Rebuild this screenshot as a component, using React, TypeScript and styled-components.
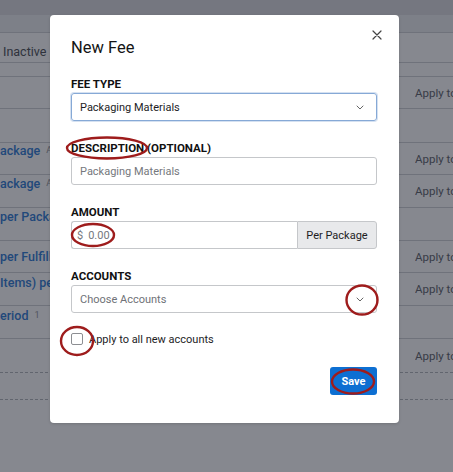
import React from "react";
import styled, { createGlobalStyle } from "styled-components";

const Global = createGlobalStyle`
  html, body { margin: 0; padding: 0; }
  body {
    width: 453px;
    height: 472px;
    overflow: hidden;
    background: #ffffff;
    font-family: Roboto, "Liberation Sans", Arial, sans-serif;
    -webkit-font-smoothing: antialiased;
  }
  * { box-sizing: border-box; }
`;

const Page = styled.div`
  position: relative;
  width: 453px;
  height: 472px;
  overflow: hidden;
  background: #ffffff;
`;

const NavBar = styled.div`
  height: 15px;
  background: #dedfe2;
`;

const SubBar = styled.div`
  height: 18px;
  background: #eeeff1;
  border-bottom: 1px solid #d3d5d9;
`;

const Row = styled.div<{ $h: number; $dashed?: boolean }>`
  height: ${(p) => p.$h}px;
  display: grid;
  grid-template-columns: 415px 38px;
  border-bottom: 1px ${(p) => (p.$dashed ? "dashed #b9bcc1" : "solid #d3d5d9")};
  white-space: nowrap;
`;

const LeftCell = styled.div<{ $pad?: number; $center?: boolean }>`
  display: flex;
  align-items: ${(p) => (p.$center ? "center" : "flex-start")};
  padding-top: ${(p) => p.$pad ?? 0}px;
  gap: 6px;
  overflow: hidden;
`;

const RightCell = styled.div`
  display: flex;
  align-items: center;
  overflow: hidden;
  font-size: 11.5px;
  color: #6c6f76;
`;

const TabText = styled.span`
  font-size: 12.5px;
  line-height: 15px;
  color: #5a5d63;
  padding-left: 3px;
`;

const LinkText = styled.span`
  font-size: 12.5px;
  line-height: 15px;
  font-weight: 500;
  color: #3f86d8;
`;

const Meta = styled.span`
  font-size: 9px;
  line-height: 15px;
  color: #9a9da3;
`;

const Overlay = styled.div`
  position: absolute;
  inset: 0;
  background: rgba(0, 5, 20, 0.475);
`;

const Modal = styled.div`
  position: relative;
  margin: 15px 0 0 50px;
  width: 349px;
  height: 408px;
  background: #ffffff;
  border-radius: 4px;
  padding: 22px 22px 28px 21px;
  box-shadow: 0 1px 3px rgba(0, 0, 0, 0.15);
`;

const Close = styled.button`
  position: absolute;
  top: 15px;
  right: 17px;
  width: 10px;
  height: 10px;
  padding: 0;
  border: none;
  background: none;
  display: flex;
  align-items: center;
  justify-content: center;
`;

const Title = styled.h2`
  margin: 0 0 18px;
  font-size: 16.5px;
  line-height: 22px;
  font-weight: 400;
  color: #151515;
`;

const Field = styled.div`
  display: flex;
  flex-direction: column;
  margin-bottom: 20px;
`;

const Label = styled.label`
  font-size: 11.5px;
  line-height: 14px;
  font-weight: 700;
  text-transform: uppercase;
  color: #111;
  margin-bottom: 2px;
`;

const SelectBox = styled.div<{ $focus?: boolean; $placeholder?: boolean }>`
  height: 28px;
  display: flex;
  align-items: center;
  justify-content: space-between;
  padding: 0 12px 0 8px;
  border: 1px solid ${(p) => (p.$focus ? "#86a9d6" : "#c5c7ca")};
  border-radius: 3px;
  box-shadow: ${(p) => (p.$focus ? "0 0 0 1px rgba(134,169,214,0.35)" : "none")};
  font-size: 11px;
  color: ${(p) => (p.$placeholder ? "#6f7277" : "#1d1d1f")};
`;

const TextInput = styled.div`
  height: 28px;
  display: flex;
  align-items: center;
  padding: 0 8px;
  border: 1px solid #c5c7ca;
  border-radius: 3px;
  font-size: 11px;
  color: #75787d;
`;

const Group = styled.div`
  display: flex;
  height: 28px;
`;

const GroupInput = styled.div`
  flex: 1;
  display: flex;
  align-items: center;
  gap: 5px;
  padding: 0 5px;
  border: 1px solid #c5c7ca;
  border-right: none;
  border-radius: 3px 0 0 3px;
  font-size: 11px;
  color: #75787d;
`;

const Addon = styled.div`
  width: 80px;
  display: flex;
  align-items: center;
  justify-content: center;
  background: #e8e9eb;
  border: 1px solid #c5c7ca;
  border-radius: 0 3px 3px 0;
  font-size: 11px;
  color: #1d1d1f;
`;

const CheckRow = styled.div`
  display: flex;
  align-items: center;
  gap: 6px;
  height: 18px;
  margin-top: -3px;
`;

const Box = styled.span`
  width: 12px;
  height: 12px;
  border: 1px solid #8c8e92;
  border-radius: 2px;
  background: #fff;
`;

const CheckLabel = styled.span`
  font-size: 11px;
  color: #1d1d1f;
`;

const Footer = styled.div`
  display: flex;
  justify-content: flex-end;
  margin-top: 19px;
`;

const SaveButton = styled.button`
  width: 47px;
  height: 28px;
  border: none;
  border-radius: 3px;
  background: #0d6fd2;
  color: #fff;
  font-family: inherit;
  font-size: 11px;
  font-weight: 700;
  padding: 0;
`;

const Marks = styled.svg`
  position: absolute;
  inset: 0;
  pointer-events: none;
`;

const Chevron = () => (
  <svg width="8" height="5" viewBox="0 0 8 5" fill="none">
    <path d="M1 1l3 3 3-3" stroke="#666" strokeWidth="1" strokeLinecap="round" strokeLinejoin="round" />
  </svg>
);

const XIcon = () => (
  <svg width="10" height="10" viewBox="0 0 10 10" fill="none">
    <path d="M1 1l8 8M9 1l-8 8" stroke="#444" strokeWidth="1.2" strokeLinecap="round" />
  </svg>
);

type BgRow = {
  h: number;
  left?: React.ReactNode;
  pad?: number;
  center?: boolean;
  apply?: boolean;
  dashed?: boolean;
};

const rows: BgRow[] = [
  { h: 30, left: <TabText>Inactive</TabText>, pad: 11 },
  { h: 14 },
  { h: 32, apply: true },
  { h: 34 },
  { h: 32, left: <><LinkText>ackage</LinkText><Meta>Al</Meta></>, pad: 0, apply: true },
  { h: 33, left: <><LinkText>ackage</LinkText><Meta>Al</Meta></>, pad: 1, apply: true },
  { h: 33, left: <LinkText>per Package</LinkText>, pad: 1 },
  { h: 32, left: <LinkText>per Fulfillment</LinkText>, center: true, apply: true },
  { h: 33, left: <LinkText>Items) per</LinkText>, pad: 2, apply: true },
  { h: 33, left: <><LinkText>eriod</LinkText><Meta>1</Meta></>, pad: 2 },
  { h: 34, apply: true, dashed: true },
  { h: 27, dashed: true },
];

export default function App() {
  return (
    <Page>
      <Global />
      <NavBar />
      <SubBar />
      {rows.map((r, i) => (
        <Row key={i} $h={r.h} $dashed={r.dashed}>
          <LeftCell $pad={r.pad} $center={r.center}>{r.left}</LeftCell>
          <RightCell>{r.apply ? "Apply to" : null}</RightCell>
        </Row>
      ))}
      <Overlay>
        <Modal>
          <Close aria-label="Close"><XIcon /></Close>
          <Title>New Fee</Title>
          <Field>
            <Label>Fee Type</Label>
            <SelectBox $focus>
              <span>Packaging Materials</span>
              <Chevron />
            </SelectBox>
          </Field>
          <Field>
            <Label>Description (Optional)</Label>
            <TextInput>Packaging Materials</TextInput>
          </Field>
          <Field>
            <Label>Amount</Label>
            <Group>
              <GroupInput><span>$</span><span>0.00</span></GroupInput>
              <Addon>Per Package</Addon>
            </Group>
          </Field>
          <Field>
            <Label>Accounts</Label>
            <SelectBox $placeholder>
              <span>Choose Accounts</span>
              <Chevron />
            </SelectBox>
          </Field>
          <CheckRow>
            <Box />
            <CheckLabel>Apply to all new accounts</CheckLabel>
          </CheckRow>
          <Footer>
            <SaveButton>Save</SaveButton>
          </Footer>
        </Modal>
      </Overlay>
      <Marks width="453" height="472" viewBox="0 0 453 472">
        <g fill="none" stroke="#9e1c1c" strokeWidth="2.4">
          <ellipse cx="107" cy="148" rx="40" ry="10.5" />
          <ellipse cx="93" cy="235" rx="21" ry="11" />
          <ellipse cx="362" cy="300" rx="15.5" ry="14.5" />
          <ellipse cx="77" cy="341" rx="16" ry="14" />
          <ellipse cx="353" cy="381.5" rx="21" ry="12" />
        </g>
      </Marks>
    </Page>
  );
}
